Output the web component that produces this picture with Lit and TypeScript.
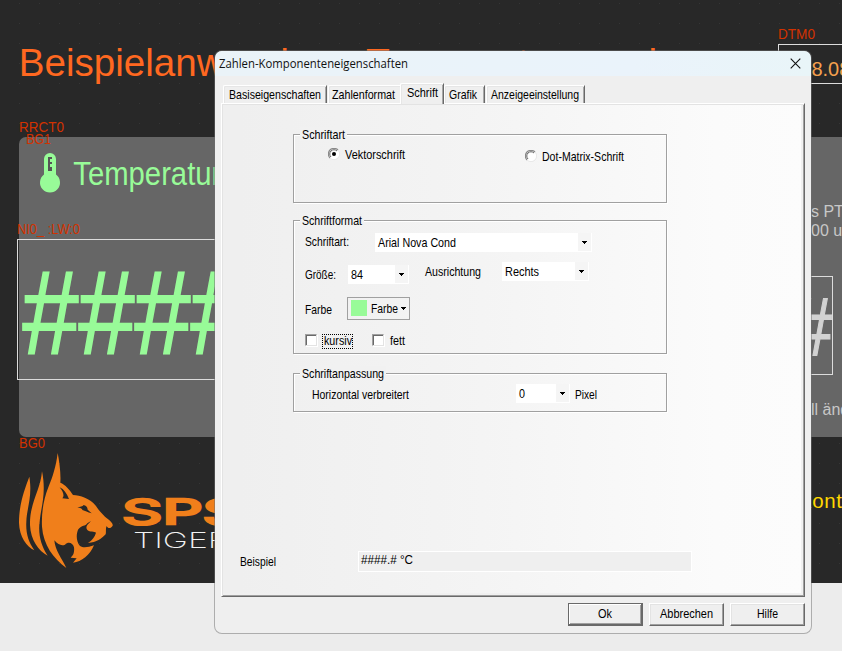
import { LitElement, html, svg, css } from "lit";
import { customElement, property } from "lit/decorators.js";

/** Single-line caption set to an exact width in the compact dialog face. */
@customElement("ui-text")
class UiText extends LitElement {
  @property() text = "";
  @property({ type: Number }) w = 50;
  static styles = css`
    :host { display: block; flex: none; height: 16px; }
    svg { display: block; overflow: visible; }
    text { font: 12.4px "Liberation Sans", Arial, sans-serif; fill: #000; }
  `;
  render() {
    return html`<svg width=${this.w} height="16"><text x="0" y="12" textLength=${this.w} lengthAdjust="spacingAndGlyphs">${this.text}</text></svg>`;
  }
}

@customElement("ui-combo")
class UiCombo extends LitElement {
  @property() text = "";
  @property({ type: Number }) w = 20;
  static styles = css`
    :host { display: flex; flex: none; box-sizing: border-box; height: 19px; background: #fff; padding: 0 1px 1px 3px; justify-content: space-between; }
    ui-text { margin-top: 2px; }
    .arrow { width: 13px; height: 18px; background: #f5f5f5; display: flex; align-items: center; justify-content: center; }
    svg { display: block; }
  `;
  render() {
    return html`<ui-text .text=${this.text} .w=${this.w}></ui-text>
      <div class="arrow"><svg width="5" height="3" shape-rendering="crispEdges"><path d="M0 0h5v1h-1v1h-1v1h-1v-1h-1v-1h-1z" /></svg></div>`;
  }
}

const T = (text: string, w: number, cls = "") => html`<ui-text class=${cls} .text=${text} .w=${w}></ui-text>`;

@customElement("hmi-canvas")
class HmiCanvas extends LitElement {
  static styles = css`
    :host { display: block; }
    svg { display: block; }
    text { font-family: "Liberation Sans", Arial, sans-serif; }
    .tag { fill: #d23200; font-size: 14px; }
    .title { fill: #ff6820; font-size: 39px; }
    .green { fill: #98fb98; }
    .digits { stroke: #98fb98; stroke-width: 1.8px; font-size: 118px; }
    .digits2 { fill: #d2d2d2; stroke: #d2d2d2; stroke-width: 1.2px; font-size: 84px; }
    .note { fill: #c8c8c8; font-size: 16px; }
    .frame { fill: none; stroke: #dcdcdc; }
    .sps { fill: #f07f1b; stroke: #f07f1b; stroke-width: 2.4px; font: 400 34.5px Inter, sans-serif; }
    .tiger { fill: #f2f2f2; font: 200 21.5px Inter, sans-serif; }
  `;
  tag(x: number, y: number, w: number, t: string) {
    return svg`<text class="tag" x=${x} y=${y} textLength=${w} lengthAdjust="spacingAndGlyphs">${t}</text>`;
  }
  render() {
    return html`<svg width="842" height="651">
      <defs><pattern id="dots" width="20" height="20" patternUnits="userSpaceOnUse"><rect x="19" y="3" width="1" height="1" fill="#363636" /></pattern></defs>
      <rect width="842" height="651" fill="#ececec" />
      <rect width="842" height="583" fill="#282828" />
      <rect width="842" height="583" fill="url(#dots)" />
      <text class="title" x="18.7" y="76" textLength="334.7" lengthAdjust="spacingAndGlyphs">Beispielanwendung</text>
      <text class="title" x="366" y="76" textLength="334.7" lengthAdjust="spacingAndGlyphs">Temperaturanzeige</text>
      <rect x="19" y="137" width="900" height="300" rx="7" fill="#666" />

      <path class="green" d="M44 159a6 6 0 0 1 12 0v15.6a10 10 0 1 1-12 0z" />
      <path d="M48 157h4v2h-2v3h2v2h-2v3h2v4h-4z" fill="#555" />
      <text class="green" x="73.3" y="185" font-size="33" textLength="148" lengthAdjust="spacingAndGlyphs">Temperatur</text>

      <text class="green digits" x="22.5" y="353.6" textLength="224" lengthAdjust="spacingAndGlyphs">####</text>
      <rect class="frame" x="17.5" y="239.5" width="400" height="140" />

      <text class="digits2" x="792" y="355.5" textLength="40" lengthAdjust="spacingAndGlyphs">#</text>
      <rect class="frame" x="600.5" y="276.5" width="232" height="98" />
      <rect class="frame" x="778.5" y="44.5" width="120" height="39" />
      <text x="800.3" y="76" font-size="20" fill="#f4a04e">18.08.</text>
      <text class="note" x="811" y="217">s PT</text>
      <text class="note" x="811" y="236">00 und</text>
      <text class="note" x="811" y="415">ll ändern</text>
      <text x="798" y="508" font-size="20.5" textLength="73" fill="#ffd700">Kontakt</text>

      ${this.tag(19, 132, 45, "RRCT0")}${this.tag(26, 144, 25, "BG1")}${this.tag(17, 234, 63, "NI0_ :LW:0")}
      ${this.tag(19, 448, 26, "BG0")}${this.tag(778, 39, 37, "DTM0")}

      <g transform="translate(0 430) scale(.33333)" fill="#f07f1b">
        <path d="M88 140C75 175 57 220 57 278C58 320 80 350 103 361C85 335 77 310 79 275C80 235 98 200 88 140Z" />
        <path d="M126 124C122 180 88 220 90 285C92 330 115 362 143 377C122 345 114 310 119 275C122 235 140 190 126 124Z" />
        <path d="M173 69C168 110 158 140 145 172C130 210 124 250 126 290C130 345 160 385 199 414C185 385 165 360 163 331C175 345 185 348 195 344C205 334 218 338 222 352C224 370 218 378 212 383L230 385L219 398C245 396 270 375 282 346C265 352 250 355 240 348C228 335 228 312 235 298C245 285 256 290 262 280L273 273C262 285 255 290 262 300C270 308 283 303 288 308C284 320 278 330 264 339C290 338 305 325 317 313C319 305 316 296 320 288C325 298 333 294 338 287C340 278 325 268 315 260C300 245 292 235 288 228C270 205 240 196 219 195C210 180 195 163 181 158C183 130 178 95 173 69Z" />
        <path fill="#282828" d="M179 172C192 178 200 190 207 207L187 205C194 198 190 185 179 172ZM232 232C240 230 248 230 251 225C260 227 262 232 263 239L275 250C262 246 256 243 247 240C247 236 240 234 232 232Z" />
      </g>
      <text class="sps" x="122" y="524.4" textLength="121" lengthAdjust="spacingAndGlyphs">SPS</text>
      <text class="tiger" x="133" y="548" textLength="96" lengthAdjust="spacingAndGlyphs">TIGER</text>
    </svg>`;
  }
}

@customElement("app-root")
export class AppRoot extends LitElement {
  static styles = css`
    :host { display: block; position: relative; width: 842px; height: 651px; overflow: hidden; }
    .dialog { position: absolute; left: 214px; top: 50px; width: 598px; height: 584px; box-sizing: border-box; border: 1px solid rgba(110, 110, 110, 0.5); background: #efefef; background-clip: padding-box; border-radius: 8px; overflow: hidden; display: flex; flex-direction: column; }
    .bar { height: 25px; flex: none; background: linear-gradient(90deg, #eaf3f8, #eaf3fb 70%, #e9f5f8); display: flex; justify-content: space-between; padding: 0 10px 0 4px; }
    .caption { display: block; overflow: visible; }
    .caption text { font: 12px "Open Sans", "Noto Sans", sans-serif; fill: #111; }
    .close { margin-top: 7px; }
    .tabs { display: flex; flex: none; height: 20px; margin: 7px 0 0 8px; align-items: flex-end; }
    .tab { height: 18px; box-sizing: border-box; border-top: 1px solid #fff; border-left: 1px solid #fff; border-right: 1px solid #696969; border-top-left-radius: 2px; box-shadow: inset 1px 1px #e6e6e6, inset -1px 0 #a8a8a8; background: #efefef; padding: 1px 0 0 5px; }
    .t1 { width: 104px; }
    .t2 { width: 72px; margin-left: 1px; border-right: 0; box-shadow: inset 1px 1px #e6e6e6; padding-left: 3px; }
    .t3 { width: 44px; height: 21px; margin-bottom: -1px; padding-left: 6px; z-index: 1; position: relative; }
    .t4 { width: 41px; padding-left: 4px; }
    .t5 { width: 99px; margin-left: 1px; padding-left: 4px; }
    .panel { margin: 0 6px 0 6px; height: 494px; box-sizing: border-box; flex: none; border: 1px solid; border-color: #fff #696969 #696969 #fff; box-shadow: inset 1px 1px #e3e3e3, inset -1px -1px #a0a0a0, inset -3px -3px #f0f0f0; background: linear-gradient(90deg, #efefef 3%, #f4f4f4 45%, #fbfbfb 85%, #fcfcfc); padding: 30px 0 0 71px; }
    .group { position: relative; box-sizing: border-box; width: 374px; border: 1px solid #a0a0a0; box-shadow: 1px 1px #fff, inset 1px 1px #fff; }
    .g1 { height: 69px; }
    .g2 { height: 134px; margin-top: 17px; }
    .g3 { height: 39px; margin-top: 19px; }
    .legend { position: absolute; left: 6px; top: -8px; height: 14px; padding: 0 2px; background: #f1f1f1; }
    .row { display: flex; align-items: flex-start; }
    .g1 .row { padding: 12px 0 0 34px; }
    .dot1 { margin-top: 1px; }
    .vek { margin-left: 5px; }
    .dot2 { margin: 3px 0 0 120px; }
    .mat { margin: 2px 0 0 5px; }
    .ra { padding: 12px 0 0 11px; }
    .ra ui-text { margin-top: 1px; }
    .ra ui-combo { margin-left: 26px; width: 217px; }
    .rb { padding: 10px 0 0 11px; }
    .size { margin-top: 5px; }
    .c84 { margin: 3px 0 0 12px; width: 61px; }
    .align { margin: 2px 0 0 16px; }
    .cre { margin-left: 21px; width: 87px; }
    .rc { padding: 13px 0 0 11px; }
    .farbe { margin-top: 5px; }
    .color { margin-left: 15px; width: 63px; height: 23px; box-sizing: border-box; border: 1px solid #a0a0a0; display: flex; align-items: flex-start; padding: 2px 0 0 3px; }
    .swatch { width: 16px; height: 16px; background: #98fb98; margin-right: 4px; flex: none; }
    .color ui-text { margin-top: 1px; }
    .color svg { margin: 7px 0 0 3px; }
    .rd { padding: 14px 0 0 11px; }
    .check { width: 12px; height: 12px; box-sizing: border-box; background: #fff; border: 1px solid; border-color: #a0a0a0 #e3e3e3 #e3e3e3 #a0a0a0; box-shadow: inset 1px 1px #696969, 1px 1px #fff; }
    .focus { margin: 0 19px 0 5px; height: 15px; width: 31px; box-sizing: border-box; border: 1px dotted #000; padding-left: 1px; }
    .focus ui-text { margin-top: -2px; }
    .fett { margin: -1px 0 0 6px; }
    .g3 .row { padding: 10px 0 0 18px; }
    .hor { margin-top: 3px; }
    .c0 { margin-left: 107px; width: 54px; }
    .px { margin: 3px 0 0 5px; }
    .sample { margin: 139px 0 0 -53px; }
    .sample > ui-text { margin-top: 3px; }
    .field { margin-left: 82px; width: 334px; height: 21px; box-sizing: border-box; border: 1px solid #fff; background: #efefef; padding-left: 2px; }
    .buttons { display: flex; justify-content: flex-end; gap: 6px; padding: 6px 6px 0 0; }
    .btn { width: 75px; height: 23px; box-sizing: border-box; border: 1px solid; border-color: #fff #696969 #696969 #fff; box-shadow: inset -1px -1px #a0a0a0, inset 1px 1px #e3e3e3; display: flex; justify-content: center; padding-top: 2px; }
    .ok { border-color: #696969; box-shadow: inset -1px -1px #696969, inset 1px 1px #fff, inset -2px -2px #a0a0a0; padding-right: 1px; }
  `;
  radio(on: boolean, cls: string) {
    return html`<svg class=${cls} width="12" height="12">
      <circle cx="6" cy="6" r="5.3" fill="#fff" />
      <path d="M2 10A5.3 5.3 0 0 1 10 2" fill="none" stroke="#8a8a8a" stroke-width="1.2" />
      <path d="M3 9A4.2 4.2 0 0 1 9 3" fill="none" stroke="#606060" />
      <path d="M10 2A5.3 5.3 0 0 1 2 10" fill="none" stroke="#e8e8e8" />
      ${on ? svg`<circle cx="6" cy="6" r="2" />` : null}</svg>`;
  }
  render() {
    return html`<hmi-canvas></hmi-canvas>
      <div class="dialog">
        <div class="bar">
          <svg class="caption" width="189" height="24"><text x="0" y="17" textLength="189" lengthAdjust="spacingAndGlyphs">Zahlen-Komponenteneigenschaften</text></svg>
          <svg class="close" width="11" height="11"><path d="M.7.7l9.6 9.6M10.3.7L.7 10.3" stroke="#111" stroke-width="1.1" /></svg>
        </div>
        <div class="tabs">
          <div class="tab t1">${T("Basiseigenschaften", 92)}</div>
          <div class="tab t2">${T("Zahlenformat", 63)}</div>
          <div class="tab t3">${T("Schrift", 31)}</div>
          <div class="tab t4">${T("Grafik", 28)}</div>
          <div class="tab t5">${T("Anzeigeeinstellung", 88)}</div>
        </div>
        <div class="panel">
          <div class="group g1">
            <div class="legend">${T("Schriftart", 43)}</div>
            <div class="row">${this.radio(true, "dot1")}${T("Vektorschrift", 60, "vek")}${this.radio(false, "dot2")}${T("Dot-Matrix-Schrift", 82, "mat")}</div>
          </div>
          <div class="group g2">
            <div class="legend">${T("Schriftformat", 60)}</div>
            <div class="row ra">${T("Schriftart:", 44)}<ui-combo text="Arial Nova Cond" w="78"></ui-combo></div>
            <div class="row rb">${T("Größe:", 31, "size")}<ui-combo class="c84" text="84" w="12"></ui-combo>${T("Ausrichtung", 56, "align")}<ui-combo class="cre" text="Rechts" w="34"></ui-combo></div>
            <div class="row rc">${T("Farbe", 27, "farbe")}
              <div class="color"><div class="swatch"></div>${T("Farbe", 27)}<svg width="5" height="3" shape-rendering="crispEdges"><path d="M0 0h5v1h-1v1h-1v1h-1v-1h-1v-1h-1z" /></svg></div>
            </div>
            <div class="row rd"><div class="check"></div><div class="focus">${T("kursiv", 28)}</div><div class="check"></div>${T("fett", 15, "fett")}</div>
          </div>
          <div class="group g3">
            <div class="legend">${T("Schriftanpassung", 82)}</div>
            <div class="row">${T("Horizontal verbreitert", 97, "hor")}<ui-combo class="c0" text="0" w="6"></ui-combo>${T("Pixel", 22, "px")}</div>
          </div>
          <div class="row sample">${T("Beispiel", 36)}<div class="field">${T("####.# °C", 52)}</div></div>
        </div>
        <div class="buttons">
          <div class="btn ok">${T("Ok", 14)}</div>
          <div class="btn">${T("Abbrechen", 53)}</div>
          <div class="btn">${T("Hilfe", 21)}</div>
        </div>
      </div>`;
  }
}
